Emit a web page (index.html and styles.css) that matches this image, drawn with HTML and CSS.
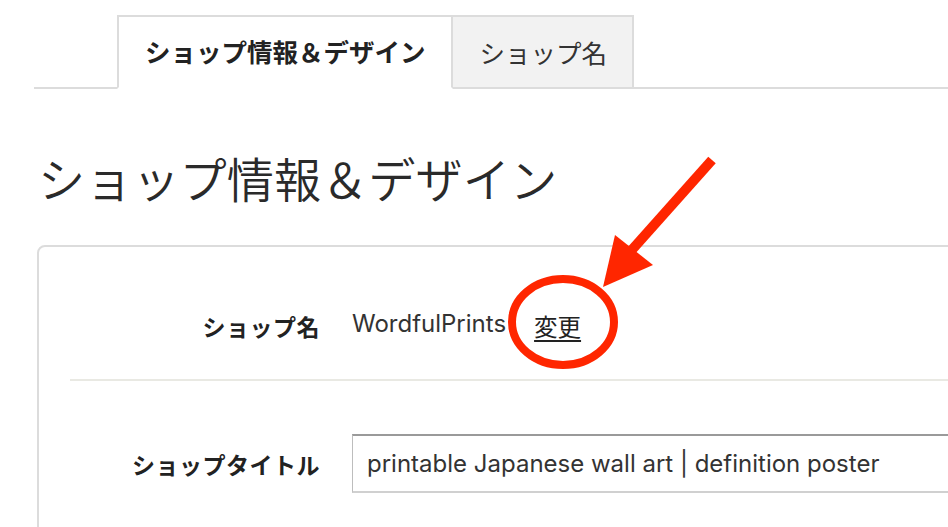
FILE: index.html
```html
<!DOCTYPE html>
<html lang="ja">
<head>
<meta charset="utf-8">
<title>ショップ情報＆デザイン</title>
<link rel="stylesheet" href="styles.css">
</head>
<body>
<div class="page">
  <nav class="tabbar">
    <a class="tab tab-active">ショップ情報＆デザイン</a>
    <a class="tab">ショップ名</a>
  </nav>

  <h1 class="title">ショップ情報＆デザイン</h1>

  <section class="card">
    <div class="row row-name">
      <div class="label">ショップ名</div>
      <div class="value">
        <span class="shop-name">WordfulPrints</span>
        <a class="change-link">変更</a>
      </div>
    </div>
    <div class="divider"></div>
    <div class="row row-title">
      <div class="label">ショップタイトル</div>
      <div class="value">
        <input class="text-input" type="text" value="printable Japanese wall art | definition poster">
      </div>
    </div>
  </section>

  <svg class="callout" width="948" height="527" viewBox="0 0 948 527" aria-hidden="true">
    <ellipse cx="563" cy="322" rx="51" ry="43" fill="none" stroke="#ff2600" stroke-width="8"/>
    <line x1="712" y1="160" x2="630" y2="252" stroke="#ff2600" stroke-width="10" stroke-linecap="butt"/>
    <polygon points="603,287 615,235 653,265" fill="#ff2600"/>
  </svg>
</div>
</body>
</html>
```

FILE: styles.css
```css
html, body {
  margin: 0;
  padding: 0;
  background: #fff;
  overflow: hidden;
}

body {
  width: 948px;
  height: 527px;
  font-family: "Noto Sans CJK JP", "Noto Sans", sans-serif;
  color: #222;
}

.page {
  position: relative;
  width: 948px;
  height: 527px;
  overflow: hidden;
}

/* tab strip */
.tabbar {
  display: flex;
  align-items: flex-end;
  margin: 15px 0 0 34px;
  padding-left: 83px;
  border-bottom: 2px solid #dcdcdc;
}

.tab {
  display: flex;
  align-items: center;
  box-sizing: border-box;
  height: 72px;
  padding: 0 25px 2px 27px;
  font-size: 25.5px;
  color: #333;
  border: 2px solid #dcdcdc;
  border-bottom: none;
  background: #f2f2f2;
}

.tab + .tab {
  border-left: none;
}

.tab-active {
  height: 74px;
  margin-bottom: -2px;
  padding: 0 25px 4px 26px;
  background: #fff;
  font-weight: 700;
  color: #222;
  border-bottom: 2px solid #fff;
}

/* page heading */
.title {
  margin: 61px 0 0 38px;
  font-size: 47.2px;
  line-height: 56px;
  font-weight: 350;
  color: #2a2a2a;
}

/* settings card */
.card {
  margin: 39px -40px 0 37px;
  border: 2px solid #dcdcdc;
  border-radius: 8px;
  height: 400px;
}

.row {
  display: flex;
  align-items: center;
  gap: 32px;
}

.row-name {
  padding: 60px 0 34px;
  height: 38px;
}

.row-title {
  padding-top: 53px;
}

.label {
  flex: 0 0 281px;
  text-align: right;
  font-size: 23px;
  font-weight: 700;
  letter-spacing: 0.5px;
  color: #222;
}

.value {
  display: flex;
  align-items: center;
  flex: 1;
}

.shop-name {
  padding-bottom: 6px;
  font-family: "Inter", "Noto Sans CJK JP", sans-serif;
  font-size: 24px;
  color: #333;
}

.change-link {
  margin-left: 28px;
  font-size: 23.5px;
  color: #222;
  text-decoration: underline;
  text-underline-offset: 4px;
  text-decoration-thickness: 2px;
}

.divider {
  margin-left: 31px;
  height: 2px;
  background: #e9e9e3;
}

.text-input {
  box-sizing: border-box;
  width: 700px;
  height: 59px;
  padding: 0 14px;
  font-family: "Inter", "Noto Sans CJK JP", sans-serif;
  font-size: 24px;
  color: #333;
  background: #fff;
  border: 1px solid #bdbdbd;
  border-top: 2px solid #9a9a9a;
  border-bottom: 2px solid #d0d0d0;
  border-radius: 0;
  outline: none;
}

/* red callout drawn over the form */
.callout {
  position: absolute;
  left: 0;
  top: 0;
  pointer-events: none;
}
```
